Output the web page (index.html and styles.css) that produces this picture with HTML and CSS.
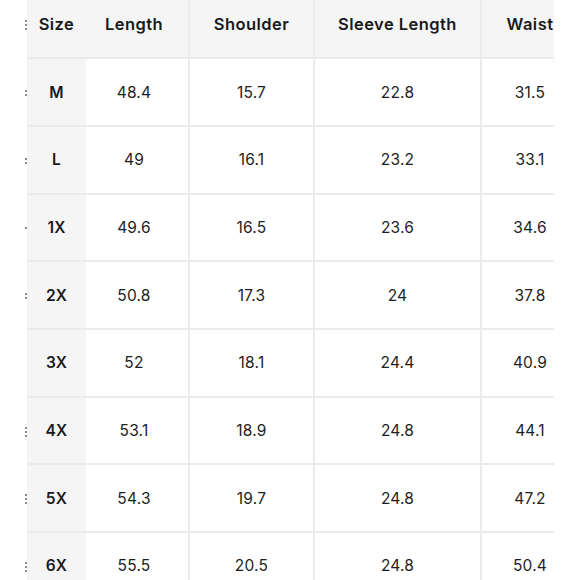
FILE: index.html
```html
<!DOCTYPE html>
<html>
<head>
<meta charset="utf-8">
<link rel="stylesheet" href="styles.css">
</head>
<body>
<div class="wrap">
  <div class="gutter">
    <div class="g-cell head"><span class="dots d3"></span></div>
    <div class="g-cell"><span class="dots d2"></span></div>
    <div class="g-cell"><span class="dots d2"></span></div>
    <div class="g-cell"><span class="dots d1"></span></div>
    <div class="g-cell"><span class="dots d2"></span></div>
    <div class="g-cell"></div>
    <div class="g-cell"><span class="dots d3"></span></div>
    <div class="g-cell"><span class="dots d3"></span></div>
    <div class="g-cell"><span class="dots d3"></span></div>
  </div>
  <div class="scroller">
    <table class="chart">
      <colgroup>
        <col class="c-size"><col class="c-len"><col class="c-sh"><col class="c-sl"><col class="c-wa">
      </colgroup>
      <thead>
        <tr><th class="size">Size</th><th class="nob">Length</th><th>Shoulder</th><th>Sleeve Length</th><th>Waist</th></tr>
      </thead>
      <tbody>
        <tr><td class="size">M</td><td class="nob">48.4</td><td>15.7</td><td>22.8</td><td>31.5</td></tr>
        <tr><td class="size">L</td><td class="nob">49</td><td>16.1</td><td>23.2</td><td>33.1</td></tr>
        <tr><td class="size">1X</td><td class="nob">49.6</td><td>16.5</td><td>23.6</td><td>34.6</td></tr>
        <tr><td class="size">2X</td><td class="nob">50.8</td><td>17.3</td><td>24</td><td>37.8</td></tr>
        <tr><td class="size">3X</td><td class="nob">52</td><td>18.1</td><td>24.4</td><td>40.9</td></tr>
        <tr><td class="size">4X</td><td class="nob">53.1</td><td>18.9</td><td>24.8</td><td>44.1</td></tr>
        <tr><td class="size">5X</td><td class="nob">54.3</td><td>19.7</td><td>24.8</td><td>47.2</td></tr>
        <tr><td class="size">6X</td><td class="nob">55.5</td><td>20.5</td><td>24.8</td><td>50.4</td></tr>
      </tbody>
    </table>
  </div>
</div>
</body>
</html>
```

FILE: styles.css
```css
html, body {
  margin: 0;
  padding: 0;
  background: #ffffff;
  overflow: hidden;
}

body {
  font-family: "Inter", "Open Sans", sans-serif;
  color: #1c1c1c;
}

.wrap {
  display: flex;
  margin-top: -8.5px;
  width: 554px;
}

.gutter {
  width: 27px;
  flex: none;
  display: flex;
  flex-direction: column;
}

.g-cell {
  height: 67.71px;
  display: flex;
  align-items: center;
  justify-content: flex-end;
}

.dots {
  display: flex;
  flex-direction: column;
  gap: 2px;
  width: 2px;
}

.dots::before, .dots::after {
  content: "";
  display: block;
  width: 2px;
  height: 2px;
  background: #8a8a8a;
}

.dots.d1::after { display: none; }

.d3 {
  border-top: 2px solid #8a8a8a;
  padding-top: 2px;
}

.scroller {
  flex: 1;
  overflow: hidden;
}

.chart {
  border-collapse: collapse;
  table-layout: fixed;
  width: 552px;
}

.c-size { width: 59px; }
.c-len { width: 103px; }
.c-sh { width: 125px; }
.c-sl { width: 167px; }
.c-wa { width: 98px; }

.chart th, .chart td {
  height: 65.71px;
  padding: 0;
  text-align: center;
  vertical-align: middle;
  border: 2px solid #ebebeb;
  white-space: nowrap;
}

.chart tr > :first-child { border-left: none; }

.chart th {
  background: #f5f5f5;
  font-size: 16.5px;
  font-weight: 600;
  letter-spacing: 0.45px;
  color: #1a1a1a;
}

.chart thead th { border-top: none; }

.chart td {
  font-size: 15.5px;
  font-weight: 400;
  letter-spacing: 0.2px;
  color: #1e1e1e;
  background: #ffffff;
}

.chart td.size {
  background: #f5f5f5;
  font-weight: 600;
  font-size: 15.5px;
  color: #1a1a1a;
}

.chart .size { border-right: none; }
.chart .nob { border-left: none; padding-right: 6px; }
```
